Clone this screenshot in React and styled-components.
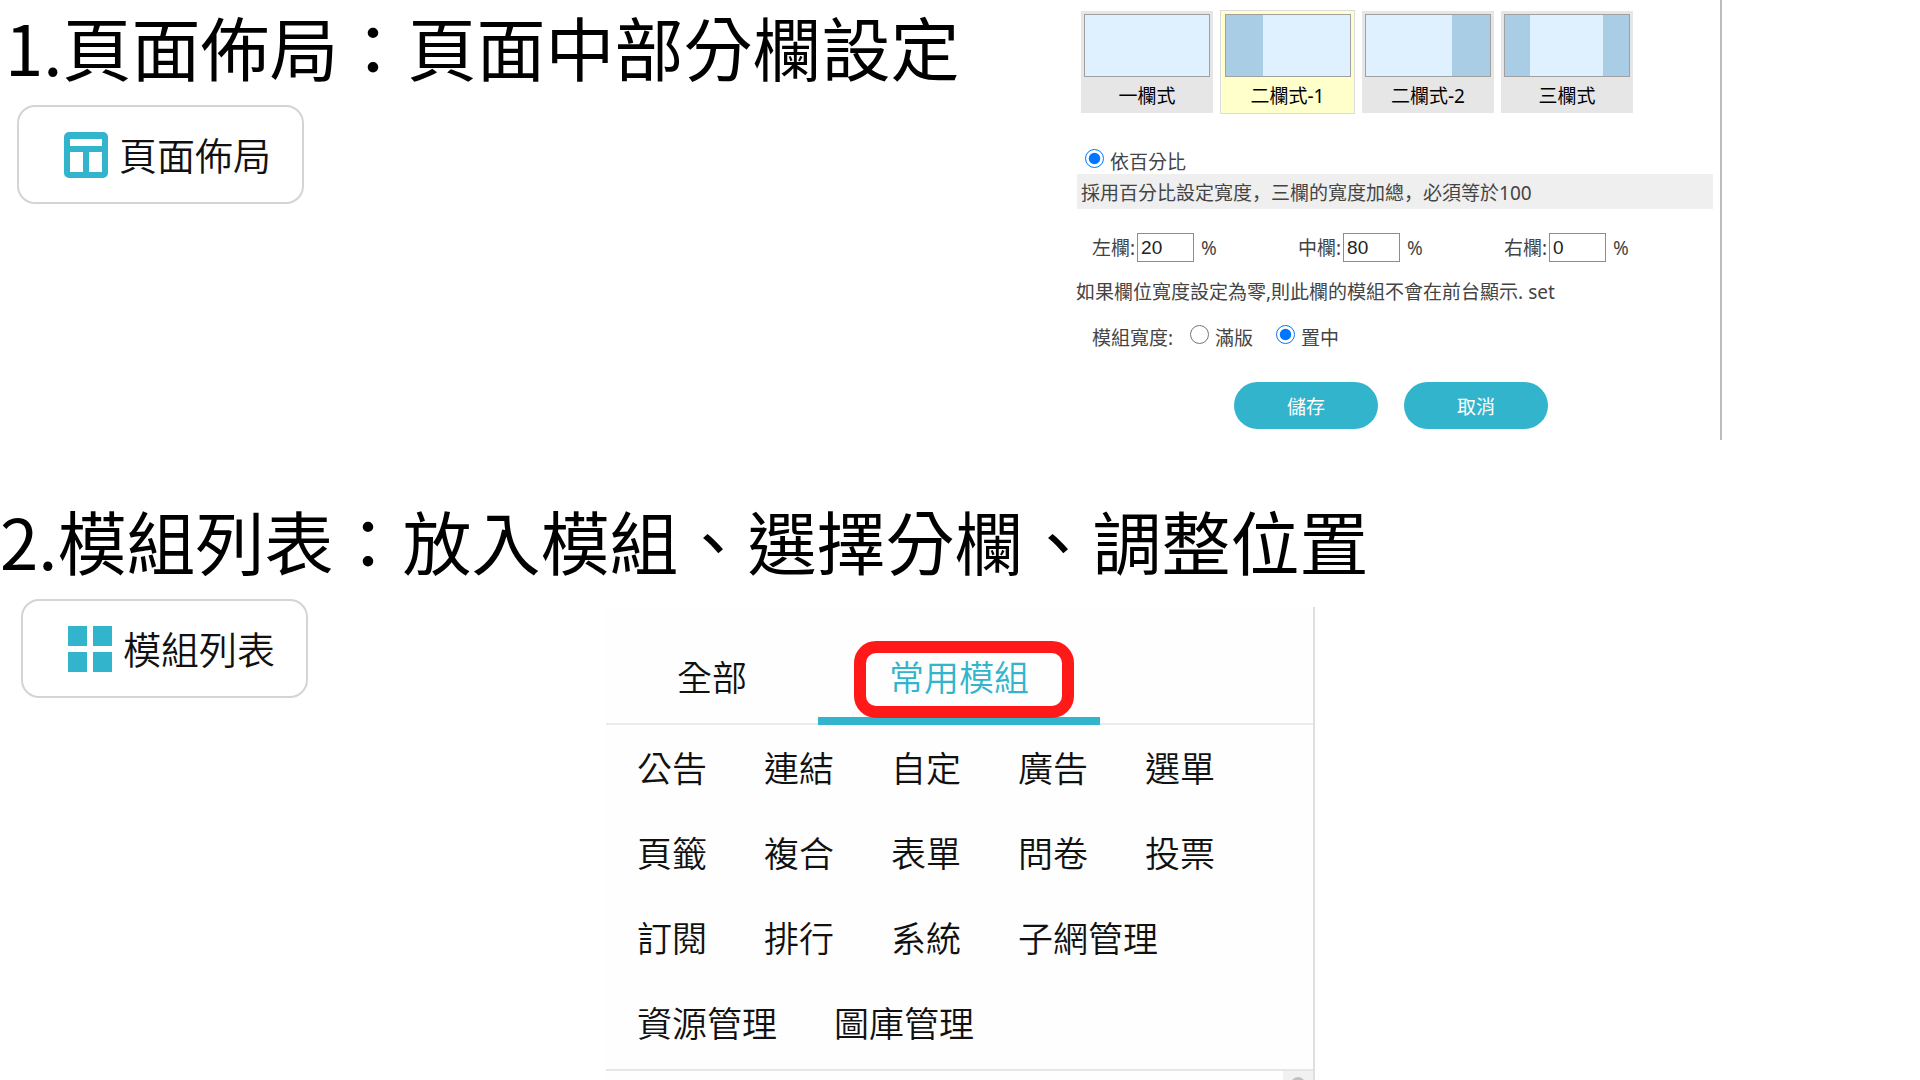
import React, { useState } from 'react'
import styled, { createGlobalStyle, css } from 'styled-components'

const GlobalStyle = createGlobalStyle`
  * {
    box-sizing: border-box;
  }
  body {
    margin: 0;
    background-color: #ffffff;
    font-family: 'Noto Sans', 'Noto Sans CJK TC', sans-serif;
    overflow: hidden;
  }
`

const Page = styled.main`
  display: flex;
  flex-direction: column;
  height: 100vh;
`

const TopSection = styled.section`
  display: flex;
  justify-content: space-between;
  min-height: 494px;
  padding-right: 198px;
`

const BottomSection = styled.section`
  flex: 1;
`

const Title = styled.h1`
  margin: 0;
  padding-left: ${props => props.$indent || 0}px;
  font-family: 'Noto Sans CJK TC', sans-serif;
  font-size: 69px;
  line-height: 92px;
  font-weight: 400;
  color: #000000;
  white-space: nowrap;
`

const Columns = styled.div`
  display: flex;
  align-items: flex-start;
`

const ToolButton = styled.button`
  display: flex;
  align-items: center;
  gap: 11px;
  flex: none;
  width: 287px;
  height: 99px;
  margin: 13px 0 0 ${props => props.$indent}px;
  padding: 0 0 0 45px;
  border: 2px solid #d4d4d4;
  border-radius: 18px;
  background-color: #ffffff;
  color: #111111;
  font-family: inherit;
  font-size: 38px;
  line-height: 48px;
  font-weight: 350;
  cursor: pointer;

  svg {
    flex: none;
    width: 44px;
    height: 46px;
  }
`

/* layout settings */

const SettingsPanel = styled.form`
  width: 646px;
  height: 440px;
  padding: 10px 7px 0 0;
  border-right: 2px solid #bdbdbd;
  color: #444444;
  font-size: 19px;
  line-height: 28px;
  font-weight: 400;
`

const LayoutOptions = styled.div`
  display: flex;
  align-items: center;
  gap: 7px;
  height: 104px;
  padding-left: 5px;
`

const LayoutOption = styled.button`
  display: flex;
  flex-direction: column;
  align-items: center;
  width: 132px;
  height: 102px;
  padding: 3px;
  border: none;
  background-color: #e6e6e6;
  color: #000000;
  font: inherit;
  cursor: pointer;

  ${props => props.$selected && css`
    width: 135px;
    height: 104px;
    border: 1px solid #dcdcdc;
    background-color: #ffffcc;
  `}
`

const Preview = styled.span`
  display: flex;
  justify-content: space-between;
  width: 126px;
  height: 65px;
  margin-bottom: 5px;
  border: 1px solid #a0a0a0;
  background-color: #dff1ff;
`

const SideColumn = styled.span`
  width: ${props => props.$size}px;
  background-color: #a8cde5;
`

const RadioLabel = styled.label`
  display: flex;
  align-items: center;
  gap: 6px;
`

const Radio = styled.input`
  width: 19px;
  height: 19px;
  margin: 0 0 8px;
  accent-color: #0075ff;
`

const PercentMode = styled.div`
  margin-top: 34px;
  padding: 0 0 0 9px;
  height: 26px;
`

const Hint = styled.p`
  margin: 0 0 0 1px;
  padding: 5px 4px 2px;
  background-color: #efefef;
`

const LowComma = styled.span`
  font-family: 'Noto Sans CJK SC', sans-serif;
  line-height: 1;
`

const WidthFields = styled.div`
  display: flex;
  margin-top: 24px;
  padding-left: 16px;
`

const WidthField = styled.label`
  display: flex;
  align-items: center;
  width: 206px;
`

const WidthInput = styled.input`
  width: 57px;
  height: 29px;
  margin: 0 7px 0 2px;
  padding: 0 3px;
  border: 1px solid #8c8c8c;
  background-color: #ffffff;
  color: #222222;
  font-family: 'Liberation Sans', sans-serif;
  font-size: 19px;
`

const Note = styled.p`
  margin: 16px 0 0;
`

const ModuleWidth = styled.div`
  display: flex;
  align-items: center;
  margin-top: 18px;
  padding-left: 16px;

  ${RadioLabel} {
    margin-left: 17px;
  }
  ${RadioLabel} + ${RadioLabel} {
    margin-left: 23px;
  }
`

const Actions = styled.div`
  display: flex;
  gap: 26px;
  margin-top: 30px;
  padding-left: 158px;
`

const ActionButton = styled.button`
  width: 144px;
  height: 47px;
  border: none;
  border-radius: 24px;
  background-color: #32b4cc;
  color: #ffffff;
  font-family: inherit;
  font-size: 19px;
  cursor: pointer;
`

/* module list */

const ModulePanel = styled.div`
  flex: none;
  width: 709px;
  height: 480px;
  margin: 21px 0 0 298px;
  border-right: 2px solid #dfdfdf;
  background-color: #fefefe;
`

const Tabs = styled.div`
  display: flex;
  height: 118px;
  padding-top: 26px;
  border-bottom: 2px solid #ebebeb;
`

const Tab = styled.button`
  position: relative;
  height: 92px;
  padding: 6px 71px 0;
  border: none;
  border-bottom: 8px solid ${props => props.$active ? '#32b4cc' : 'transparent'};
  background: none;
  color: ${props => props.$active ? '#32b4cc' : '#111111'};
  font-family: inherit;
  font-size: 35px;
  line-height: 46px;
  font-weight: 350;
  cursor: pointer;
`

const Highlight = styled.span`
  position: absolute;
  top: 8px;
  left: 36px;
  right: 26px;
  height: 77px;
  border: 12px solid #ff1919;
  border-radius: 22px;
`

const ModuleList = styled.div`
  display: flex;
  flex-wrap: wrap;
  column-gap: 57px;
  row-gap: 37px;
  height: 346px;
  align-content: flex-start;
  padding: 20px 31px 0;
  border-bottom: 2px solid #e6e6e6;
`

const ModuleItem = styled.button`
  padding: 0;
  border: none;
  background: none;
  color: #111111;
  font-family: inherit;
  font-size: 35px;
  line-height: 48px;
  font-weight: 350;
  cursor: pointer;
`

const ScrollTrack = styled.div`
  width: 30px;
  height: 16px;
  margin-left: auto;
  padding: 6px 8px 0;
  background-color: #f1f1f1;
`

const ScrollThumb = styled.div`
  height: 10px;
  border-radius: 7px 7px 0 0;
  background-color: #c1c1c1;
`

const layouts = [
  { name: '一欄式', left: 0, right: 0 },
  { name: '二欄式-1', left: 37, right: 0 },
  { name: '二欄式-2', left: 0, right: 38 },
  { name: '三欄式', left: 25, right: 26 },
]

const modules = [
  '公告', '連結', '自定', '廣告', '選單',
  '頁籤', '複合', '表單', '問卷', '投票',
  '訂閱', '排行', '系統', '子網管理',
  '資源管理', '圖庫管理',
]

const LayoutIcon = () => (
  <svg viewBox="0 0 44 46" aria-hidden="true">
    <path
      fill="#32b4cc"
      fillRule="evenodd"
      d="M5 0h34a5 5 0 0 1 5 5v36a5 5 0 0 1-5 5H5a5 5 0 0 1-5-5V5a5 5 0 0 1 5-5zM6 7v7h32V7zM6 20v20h13V20zM25 20v20h13V20z"
    />
  </svg>
)

const GridIcon = () => (
  <svg viewBox="0 0 44 46" aria-hidden="true" fill="#32b4cc">
    <path d="M0 0h19v20H0zM25 0h19v20H25zM0 26h19v20H0zM25 26h19v20H25z" />
  </svg>
)

function LayoutSettings() {
  const [layout, setLayout] = useState('二欄式-1')
  const [widths, setWidths] = useState({ 左欄: '20', 中欄: '80', 右欄: '0' })
  const [align, setAlign] = useState('置中')

  return (
    <SettingsPanel onSubmit={e => e.preventDefault()}>
      <LayoutOptions>
        {layouts.map(item => (
          <LayoutOption
            key={item.name}
            type="button"
            $selected={layout === item.name}
            onClick={() => setLayout(item.name)}
          >
            <Preview>
              <SideColumn $size={item.left} />
              <SideColumn $size={item.right} />
            </Preview>
            {item.name}
          </LayoutOption>
        ))}
      </LayoutOptions>
      <PercentMode>
        <RadioLabel>
          <Radio type="radio" name="mode" defaultChecked />
          依百分比
        </RadioLabel>
      </PercentMode>
      <Hint>
        採用百分比設定寬度<LowComma>，</LowComma>三欄的寬度加總<LowComma>，</LowComma>必須等於100
      </Hint>
      <WidthFields>
        {Object.keys(widths).map(name => (
          <WidthField key={name}>
            {name}:
            <WidthInput
              type="text"
              value={widths[name]}
              onChange={e => setWidths({ ...widths, [name]: e.target.value })}
            />
            %
          </WidthField>
        ))}
      </WidthFields>
      <Note>如果欄位寬度設定為零,則此欄的模組不會在前台顯示. set</Note>
      <ModuleWidth>
        模組寬度:
        {['滿版', '置中'].map(name => (
          <RadioLabel key={name}>
            <Radio type="radio" name="align" checked={align === name} onChange={() => setAlign(name)} />
            {name}
          </RadioLabel>
        ))}
      </ModuleWidth>
      <Actions>
        <ActionButton type="submit">儲存</ActionButton>
        <ActionButton type="button">取消</ActionButton>
      </Actions>
    </SettingsPanel>
  )
}

export default function App() {
  const [tab, setTab] = useState('常用模組')

  return (
    <Page>
      <GlobalStyle />
      <TopSection>
        <div>
          <Title $indent={5}>1.頁面佈局：頁面中部分欄設定</Title>
          <ToolButton $indent={17}>
            <LayoutIcon />
            頁面佈局
          </ToolButton>
        </div>
        <LayoutSettings />
      </TopSection>
      <BottomSection>
        <Title>2.模組列表：放入模組、選擇分欄、調整位置</Title>
        <Columns>
          <ToolButton $indent={21}>
            <GridIcon />
            模組列表
          </ToolButton>
          <ModulePanel>
            <Tabs>
              {['全部', '常用模組'].map(name => (
                <Tab key={name} $active={tab === name} onClick={() => setTab(name)}>
                  {name}
                  {tab === name && <Highlight />}
                </Tab>
              ))}
            </Tabs>
            <ModuleList>
              {modules.map(name => (
                <ModuleItem key={name}>{name}</ModuleItem>
              ))}
            </ModuleList>
            <ScrollTrack>
              <ScrollThumb />
            </ScrollTrack>
          </ModulePanel>
        </Columns>
      </BottomSection>
    </Page>
  )
}
